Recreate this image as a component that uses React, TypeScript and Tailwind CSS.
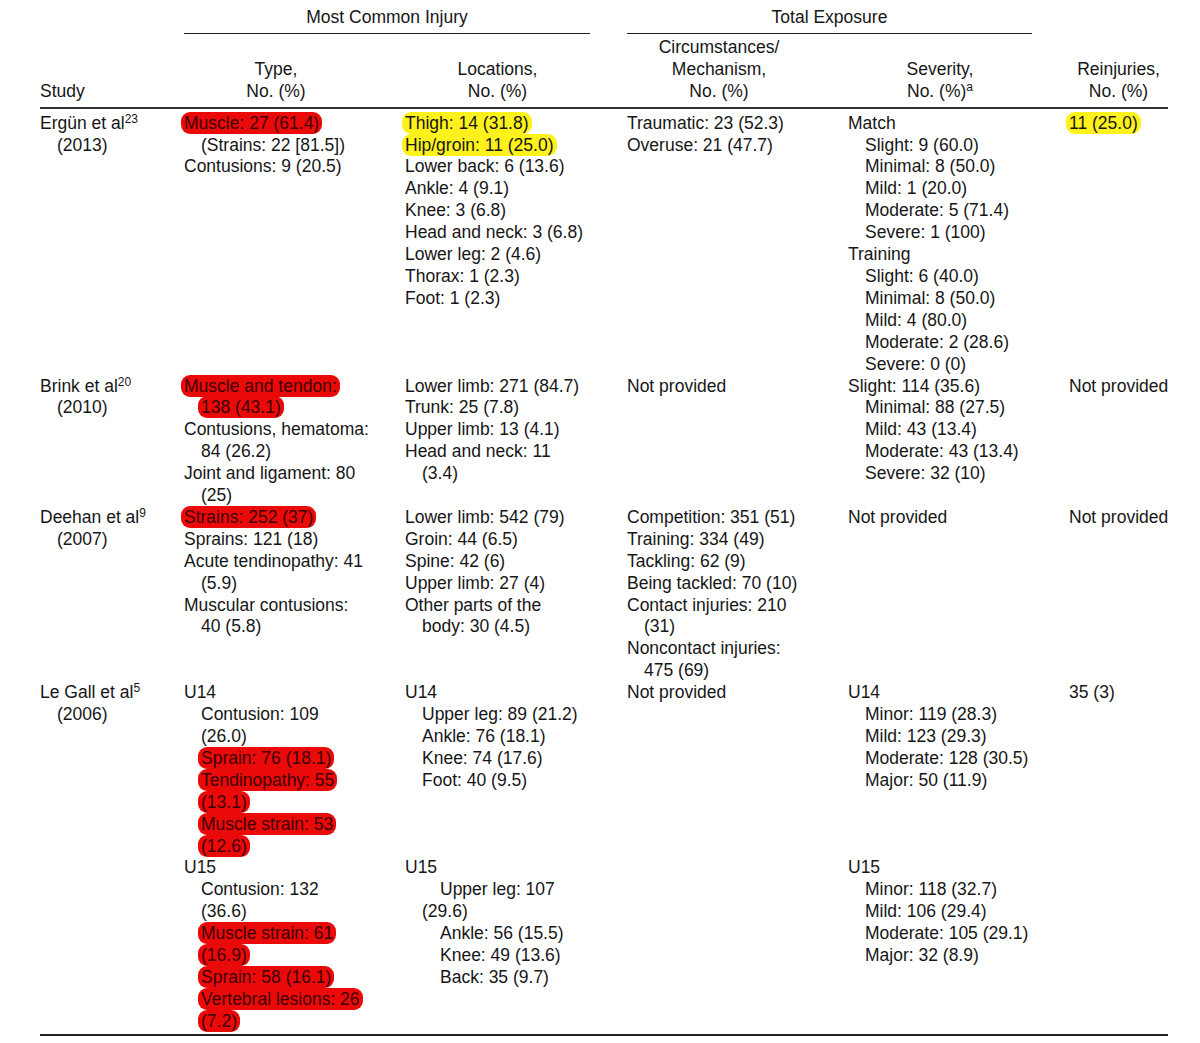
import React from 'react';

type Line = { t: string; i?: number; hl?: 'r' | 'y'; sup?: string };
type Row = { cells: Line[][] };

const L = (t: string, i = 0, hl?: 'r' | 'y'): Line => ({ t, i, hl });
const blank: Line = { t: '' };

const rows: Row[] = [
  {
    cells: [
      [{ t: 'Ergün et al', sup: '23' }, L('(2013)', 1)],
      [L('Muscle: 27 (61.4)', 0, 'r'), L('(Strains: 22 [81.5])', 1), L('Contusions: 9 (20.5)')],
      [
        L('Thigh: 14 (31.8)', 0, 'y'),
        L('Hip/groin: 11 (25.0)', 0, 'y'),
        L('Lower back: 6 (13.6)'),
        L('Ankle: 4 (9.1)'),
        L('Knee: 3 (6.8)'),
        L('Head and neck: 3 (6.8)'),
        L('Lower leg: 2 (4.6)'),
        L('Thorax: 1 (2.3)'),
        L('Foot: 1 (2.3)'),
      ],
      [L('Traumatic: 23 (52.3)'), L('Overuse: 21 (47.7)')],
      [
        L('Match'),
        L('Slight: 9 (60.0)', 1),
        L('Minimal: 8 (50.0)', 1),
        L('Mild: 1 (20.0)', 1),
        L('Moderate: 5 (71.4)', 1),
        L('Severe: 1 (100)', 1),
        L('Training'),
        L('Slight: 6 (40.0)', 1),
        L('Minimal: 8 (50.0)', 1),
        L('Mild: 4 (80.0)', 1),
        L('Moderate: 2 (28.6)', 1),
        L('Severe: 0 (0)', 1),
      ],
      [L('11 (25.0)', 0, 'y')],
    ],
  },
  {
    cells: [
      [{ t: 'Brink et al', sup: '20' }, L('(2010)', 1)],
      [
        L('Muscle and tendon:', 0, 'r'),
        L('138 (43.1)', 1, 'r'),
        L('Contusions, hematoma:'),
        L('84 (26.2)', 1),
        L('Joint and ligament: 80'),
        L('(25)', 1),
      ],
      [
        L('Lower limb: 271 (84.7)'),
        L('Trunk: 25 (7.8)'),
        L('Upper limb: 13 (4.1)'),
        L('Head and neck: 11'),
        L('(3.4)', 1),
      ],
      [L('Not provided')],
      [
        L('Slight: 114 (35.6)'),
        L('Minimal: 88 (27.5)', 1),
        L('Mild: 43 (13.4)', 1),
        L('Moderate: 43 (13.4)', 1),
        L('Severe: 32 (10)', 1),
      ],
      [L('Not provided')],
    ],
  },
  {
    cells: [
      [{ t: 'Deehan et al', sup: '9' }, L('(2007)', 1)],
      [
        L('Strains: 252 (37)', 0, 'r'),
        L('Sprains: 121 (18)'),
        L('Acute tendinopathy: 41'),
        L('(5.9)', 1),
        L('Muscular contusions:'),
        L('40 (5.8)', 1),
      ],
      [
        L('Lower limb: 542 (79)'),
        L('Groin: 44 (6.5)'),
        L('Spine: 42 (6)'),
        L('Upper limb: 27 (4)'),
        L('Other parts of the'),
        L('body: 30 (4.5)', 1),
      ],
      [
        L('Competition: 351 (51)'),
        L('Training: 334 (49)'),
        L('Tackling: 62 (9)'),
        L('Being tackled: 70 (10)'),
        L('Contact injuries: 210'),
        L('(31)', 1),
        L('Noncontact injuries:'),
        L('475 (69)', 1),
      ],
      [L('Not provided')],
      [L('Not provided')],
    ],
  },
  {
    cells: [
      [{ t: 'Le Gall et al', sup: '5' }, L('(2006)', 1)],
      [
        L('U14'),
        L('Contusion: 109', 1),
        L('(26.0)', 1),
        L('Sprain: 76 (18.1)', 1, 'r'),
        L('Tendinopathy: 55', 1, 'r'),
        L('(13.1)', 1, 'r'),
        L('Muscle strain: 53', 1, 'r'),
        L('(12.6)', 1, 'r'),
        L('U15'),
        L('Contusion: 132', 1),
        L('(36.6)', 1),
        L('Muscle strain: 61', 1, 'r'),
        L('(16.9)', 1, 'r'),
        L('Sprain: 58 (16.1)', 1, 'r'),
        L('Vertebral lesions: 26', 1, 'r'),
        L('(7.2)', 1, 'r'),
      ],
      [
        L('U14'),
        L('Upper leg: 89 (21.2)', 1),
        L('Ankle: 76 (18.1)', 1),
        L('Knee: 74 (17.6)', 1),
        L('Foot: 40 (9.5)', 1),
        blank,
        blank,
        blank,
        L('U15'),
        L('Upper leg: 107', 2),
        L('(29.6)', 1),
        L('Ankle: 56 (15.5)', 2),
        L('Knee: 49 (13.6)', 2),
        L('Back: 35 (9.7)', 2),
      ],
      [L('Not provided')],
      [
        L('U14'),
        L('Minor: 119 (28.3)', 1),
        L('Mild: 123 (29.3)', 1),
        L('Moderate: 128 (30.5)', 1),
        L('Major: 50 (11.9)', 1),
        blank,
        blank,
        blank,
        L('U15'),
        L('Minor: 118 (32.7)', 1),
        L('Mild: 106 (29.4)', 1),
        L('Moderate: 105 (29.1)', 1),
        L('Major: 32 (8.9)', 1),
      ],
      [L('35 (3)')],
    ],
  },
];

const grid = 'grid grid-cols-[144px_221px_222px_221px_221px_99px]';

function TextLine({ line }: { line: Line }) {
  const pad = line.i === 2 ? 'pl-[35px]' : line.i === 1 ? 'pl-[17px]' : 'pl-0';
  let content: React.ReactNode = line.t || '\u00a0';
  if (line.hl === 'r') {
    content = (
      <span className="bg-[#ea0a0a] text-[#3d0000] rounded-[9px] px-[3px] -mx-[3px] py-[1px]">{line.t}</span>
    );
  } else if (line.hl === 'y') {
    content = <span className="bg-[#fff21c] rounded-[9px] px-[3px] -mx-[3px] py-[1px]">{line.t}</span>;
  }
  return (
    <div className={`${pad} whitespace-nowrap`}>
      {content}
      {line.sup && <sup className="text-[12px] -top-[6px]">{line.sup}</sup>}
    </div>
  );
}

export default function App() {
  return (
    <div
      className="bg-white w-[1200px] h-[1043px] pl-[40px] pt-[7px] text-[#161616] text-[17.5px] leading-[21.9px]"
      style={{ fontFamily: '"Liberation Sans", Arial, sans-serif' }}
    >
      <div className="w-[1128px]">
        {/* spanner headings */}
        <div className={grid}>
          <div />
          <div className="col-span-2 pr-[37px]">
            <div className="text-center">Most Common Injury</div>
            <div className="mt-[4px] h-px bg-[#222]" />
          </div>
          <div className="col-span-2 pr-[37px]">
            <div className="text-center">Total Exposure</div>
            <div className="mt-[4px] h-px bg-[#222]" />
          </div>
          <div />
        </div>

        {/* column headings */}
        <div className={`${grid} mt-[3px] items-end`}>
          <div>Study</div>
          <div className="pr-[37px] text-center">
            <div>Type,</div>
            <div>No. (%)</div>
          </div>
          <div className="pr-[37px] text-center">
            <div>Locations,</div>
            <div>No. (%)</div>
          </div>
          <div className="pr-[37px] text-center">
            <div>Circumstances/</div>
            <div>Mechanism,</div>
            <div>No. (%)</div>
          </div>
          <div className="pr-[37px] text-center">
            <div>Severity,</div>
            <div>
              No. (%)<sup className="text-[12px] -top-[6px]">a</sup>
            </div>
          </div>
          <div className="text-center">
            <div>Reinjuries,</div>
            <div>No. (%)</div>
          </div>
        </div>
        <div className="mt-[4px] h-[2px] bg-[#333]" />

        {/* body */}
        <div className="pt-[4px]">
          {rows.map((row, ri) => (
            <div key={ri} className={grid}>
              {row.cells.map((cell, ci) => (
                <div key={ci}>
                  {cell.map((line, li) => (
                    <TextLine key={li} line={line} />
                  ))}
                </div>
              ))}
            </div>
          ))}
        </div>
        <div className="mt-[1px] h-[2px] bg-[#222]" />
      </div>
    </div>
  );
}
